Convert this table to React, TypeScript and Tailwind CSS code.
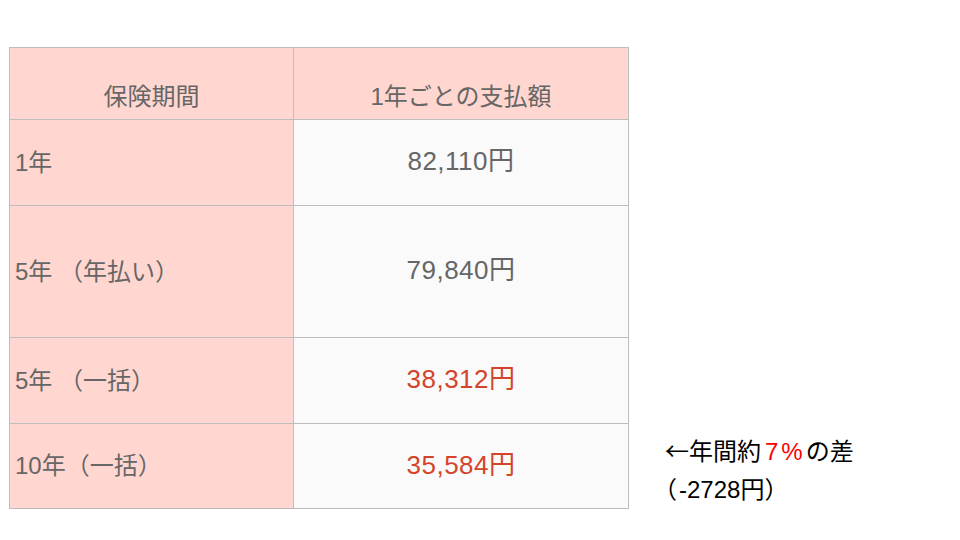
import React from "react";

const font = { fontFamily: '"Liberation Sans", Arial, "Noto Sans CJK JP", sans-serif' };
const cjk = { fontFamily: '"Noto Sans CJK JP", sans-serif' };

export default function App() {
  const rows = [
    { label: "1年", value: "82,110円", red: false, h: "h-[86px]" },
    { label: "5年 （年払い）", value: "79,840円", red: false, h: "h-[132px]" },
    { label: "5年 （一括）", value: "38,312円", red: true, h: "h-[86px]" },
    { label: "10年（一括）", value: "35,584円", red: true, h: "h-[85px]" },
  ];
  return (
    <div
      className="w-[960px] h-[540px] bg-white flex items-end pt-[47px] pl-[9px] pb-[31px]"
      style={font}
    >
      <table className="border-collapse w-[619px] table-fixed">
        <colgroup>
          <col className="w-[284px]" />
          <col className="w-[335px]" />
        </colgroup>
        <thead>
          <tr className="h-[72px]">
            <th className="border border-[#bdbdbd] bg-[#ffd6d0] align-bottom pb-[8px] text-[24px] font-normal text-[#666666] text-center leading-[28px]">
              保険期間
            </th>
            <th className="border border-[#bdbdbd] bg-[#ffd6d0] align-bottom pb-[8px] text-[24px] font-normal text-[#666666] text-center leading-[28px]">
              1年ごとの支払額
            </th>
          </tr>
        </thead>
        <tbody>
          {rows.map((r) => (
            <tr key={r.label} className={r.h}>
              <td className="border border-[#bdbdbd] bg-[#ffd6d0] pl-[5px] text-[24px] text-[#666666] align-middle leading-[28px] whitespace-pre">
                {r.label}
              </td>
              <td
                className={
                  "border border-[#bdbdbd] bg-[#fafafa] text-center text-[26px] tracking-[0.5px] align-middle leading-[28px] pb-[3px] " +
                  (r.red ? "text-[#d4442a]" : "text-[#666666]")
                }
              >
                {r.value}
              </td>
            </tr>
          ))}
        </tbody>
      </table>
      <div className="ml-[37px] mb-0 text-[24px] leading-[38px] text-black whitespace-nowrap">
        <div>
          <span style={cjk} className="ml-[-1px]">←</span>年間約<span className="text-[#ff0000] tracking-[3px] ml-[4px]">7%</span>の差
        </div>
        <div>
          <span className="ml-[-13px] mr-[2px]">（</span>-2728円）
        </div>
      </div>
    </div>
  );
}
